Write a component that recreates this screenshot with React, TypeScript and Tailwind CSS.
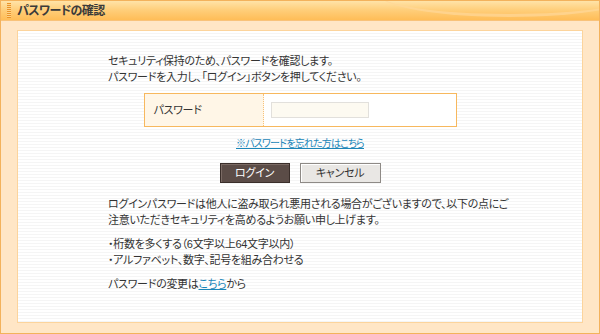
export default function App() {
  const jp = "font-['Liberation_Sans','Noto_Sans_CJK_JP',sans-serif] [font-feature-settings:'palt']"

  return (
    <div className={`w-[600px] h-[334px] flex flex-col border border-[#f3b25c] bg-[#ffe6c6] text-[#333] ${jp}`}>
      {/* ヘッダー */}
      <div className="h-[20px] flex items-center border-b border-[#f8c27a] bg-[linear-gradient(to_bottom,#ffe3a8_0%,#ffcf7c_45%,#ffbd57_100%)] relative overflow-hidden">
        <div className="absolute right-[-40px] top-[-30px] w-[260px] h-[46px] rounded-[50%] border-b-[3px] border-[#ffd899] opacity-70"></div>
        <div className="ml-[6px] w-[4px] h-[15px] bg-[repeating-linear-gradient(to_bottom,#e8942a_0px,#e8942a_1px,#ffd38a_1px,#ffd38a_2px)]"></div>
        <h1 className="ml-[6px] text-[12px] font-bold leading-none tracking-[-0.6px] text-[#3a3a3a] relative">パスワードの確認</h1>
      </div>

      {/* 本体 */}
      <div className="flex-1 px-[16px] pt-[9px] pb-[10px] flex">
        <div className="flex-1 border border-[#fcd49c] bg-[repeating-linear-gradient(to_bottom,#ffffff_0px,#ffffff_2px,#f5f5f5_2px,#f5f5f5_3px)] pt-[22px] text-[11px] leading-[16px] tracking-[-0.3px]">
          <div className="pl-[90px]">
            <p>セキュリティ保持のため、パスワードを確認します。</p>
            <p>パスワードを入力し、「ログイン」ボタンを押してください。</p>
          </div>

          <div className="mt-[8px] mx-auto w-[313px] h-[34px] border border-[#f7b85e] flex bg-white">
            <div className="w-[119px] bg-[#fff6e7] border-r border-dotted border-[#f7c27a] flex items-center pl-[9px]">
              パスワード
            </div>
            <div className="flex-1 flex items-center pl-[7px]">
              <input
                type="password"
                className="w-[98px] h-[16px] bg-[#fdfaf1] border border-[#e2e0dc] outline-none"
              />
            </div>
          </div>

          <div className="mt-[10px] text-center text-[10px] leading-[14px] tracking-[-0.8px]">
            <a href="#" className="text-[#1b86b8] underline">※パスワードを忘れた方はこちら</a>
          </div>

          <div className="mt-[12px] flex justify-center gap-[10px]">
            <button className="w-[70px] h-[20px] bg-[#5b4c47] border border-[#3a2e2a] text-white text-[11px] leading-none shadow-[inset_1px_1px_0_#7a6a64]">
              ログイン
            </button>
            <button className="w-[81px] h-[20px] bg-[#e9e7e4] border border-[#8e8a86] text-[#333] text-[11px] leading-none shadow-[inset_1px_1px_0_#fff]">
              キャンセル
            </button>
          </div>

          <div className="pl-[90px] mt-[13px]">
            <p className="whitespace-nowrap">ログインパスワードは他人に盗み取られ悪用される場合がございますので、以下の点にご</p>
            <p>注意いただきセキュリティを高めるようお願い申し上げます。</p>
            <p className="mt-[8px]">・桁数を多くする（6文字以上64文字以内）</p>
            <p>・アルファベット、数字、記号を組み合わせる</p>
            <p className="mt-[8px]">
              パスワードの変更は<a href="#" className="text-[#1b86b8] underline">こちら</a>から
            </p>
          </div>
        </div>
      </div>
    </div>
  )
}
